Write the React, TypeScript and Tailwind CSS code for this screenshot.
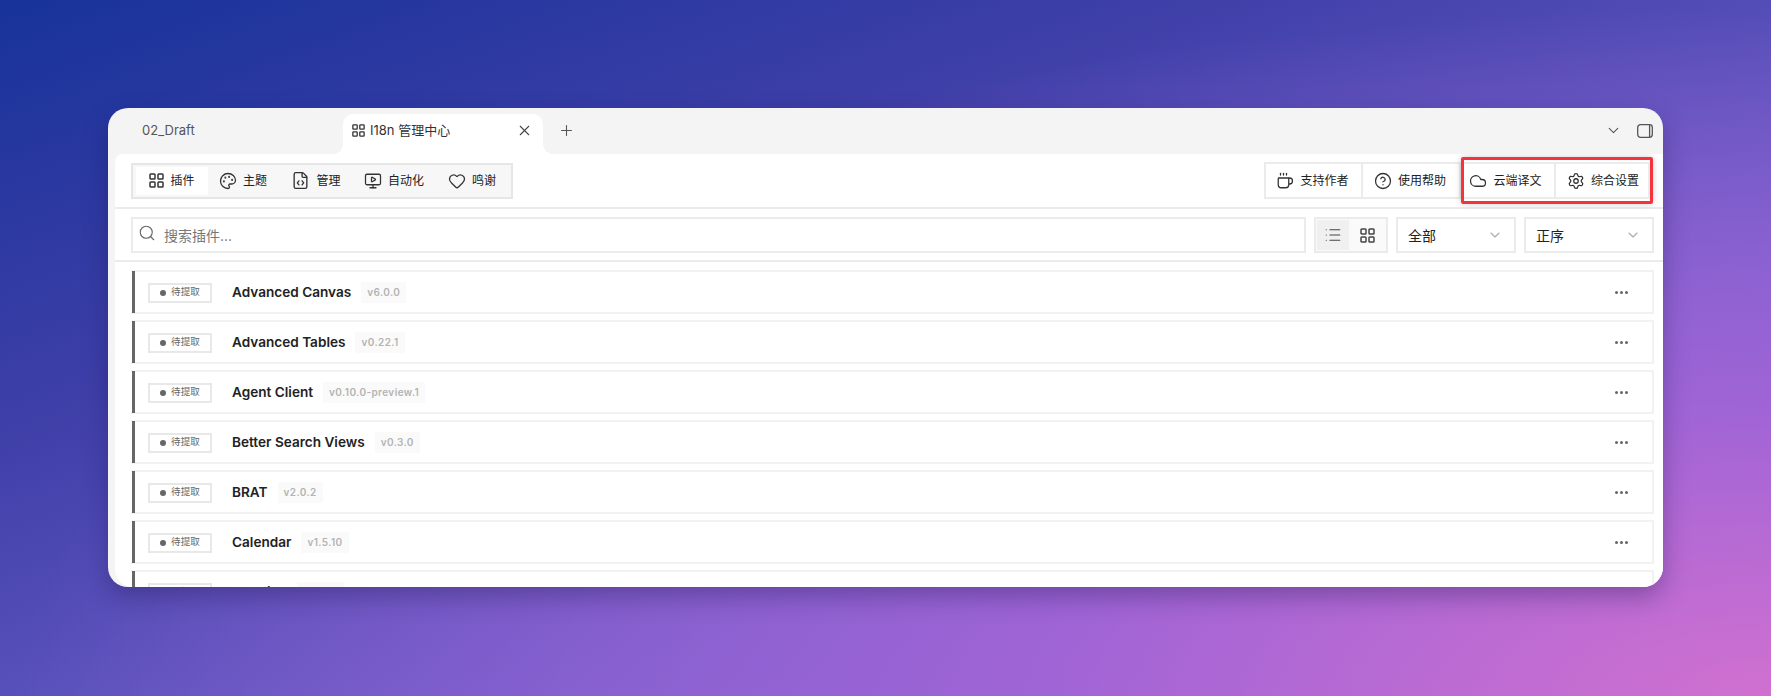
import React from 'react';
import {
  ChevronDown,
  Cloud,
  CircleHelp,
  Coffee,
  FileCode,
  Heart,
  List,
  MonitorPlay,
  Palette,
  Plus,
  Search,
  Settings,
  X,
} from 'lucide-react';

type IconProps = { className?: string; strokeWidth?: number };

// lucide's layout-grid is too round for this one
function GridIcon({ className }: IconProps) {
  return (
    <svg viewBox="0 0 15 15" fill="none" stroke="currentColor" strokeWidth="1.5" className={className}>
      <rect x="1" y="1" width="5" height="5" rx="0.8" />
      <rect x="9" y="1" width="5" height="5" rx="0.8" />
      <rect x="1" y="9" width="5" height="5" rx="0.8" />
      <rect x="9" y="9" width="5" height="5" rx="0.8" />
    </svg>
  );
}

const tabs = [
  { label: '插件', icon: GridIcon, active: true, width: 'w-[72px]', size: 'w-[15px] h-[15px]' },
  { label: '主题', icon: Palette, width: 'w-[72px] pr-[2px]', size: 'w-[18px] h-[18px]' },
  { label: '管理', icon: FileCode, width: 'w-[72px]', size: 'w-[19px] h-[19px]' },
  { label: '自动化', icon: MonitorPlay, width: 'w-[84px]', size: 'w-[18px] h-[18px]' },
  { label: '鸣谢', icon: Heart, width: 'w-[72px]', size: 'w-[18px] h-[18px]' },
];

const plugins = [
  { name: 'Advanced Canvas', version: 'v6.0.0' },
  { name: 'Advanced Tables', version: 'v0.22.1' },
  { name: 'Agent Client', version: 'v0.10.0-preview.1' },
  { name: 'Better Search Views', version: 'v0.3.0' },
  { name: 'BRAT', version: 'v2.0.2' },
  { name: 'Calendar', version: 'v1.5.10' },
  { name: 'Cardlink', version: 'v1.12.3' },
];

function ToolButton({ icon: Icon, label, width }: { icon: typeof Cloud; label: string; width: string }) {
  return (
    <div className={`flex items-center justify-center gap-[6px] text-[12px] text-[#222] border-r-2 border-[#ebebeb] last:border-r-0 ${width}`}>
      <Icon className="w-[18px] h-[18px] text-[#333]" strokeWidth={1.7} />
      <span>{label}</span>
    </div>
  );
}

function Select({ label, width }: { label: string; width: string }) {
  return (
    <div className={`h-9 flex items-center justify-between pl-[10px] pr-[11px] border-2 border-[#ebebeb] text-[14px] text-[#222] ${width}`}>
      <span>{label}</span>
      <ChevronDown className="w-4 h-4 text-[#aaa]" strokeWidth={1.6} />
    </div>
  );
}

function PluginRow({ name, version }: { name: string; version: string }) {
  return (
    <div className="h-[44px] shrink-0 flex items-center border-2 border-[#f2f2f2] border-l-0 relative pt-[1px] pl-[17px] pr-[24px]">
      <div className="absolute left-[1px] -top-[1px] -bottom-[1px] w-[3px] bg-[#666]" />
      <div className="w-[64px] h-[20px] flex items-center justify-center gap-[5px] border-2 border-[#e8e8e8] text-[9.6px] text-[#666]">
        <span className="w-[6px] h-[6px] rounded-full bg-[#666]" />
        <span>待提取</span>
      </div>
      <span className="ml-5 text-[13.6px] font-semibold text-[#222]">{name}</span>
      <span className="ml-[10px] px-[6px] py-[3px] bg-[#fafafa] text-[10px] font-semibold text-[#b3b3b3] tracking-[0.4px]">{version}</span>
      <svg viewBox="0 0 13 3" className="ml-auto w-[13px] h-[3px] text-[#666]" fill="currentColor">
        <circle cx="1.5" cy="1.5" r="1.5" />
        <circle cx="6.5" cy="1.5" r="1.5" />
        <circle cx="11.5" cy="1.5" r="1.5" />
      </svg>
    </div>
  );
}

export default function App() {
  return (
    <div className="w-[1771px] h-[696px] overflow-hidden pt-[108px] pl-[108px] bg-[radial-gradient(ellipse_at_100%_100%,#d070d0_0%,rgba(165,100,215,0.85)_30%,rgba(100,90,200,0)_70%),linear-gradient(160deg,#17339a_0%,#3f3fa8_32%,#6c5ec9_68%,#9069d8_100%)] font-['Inter','Noto_Sans_CJK_SC',sans-serif]">
      <div className="w-[1555px] h-[479px] rounded-[20px] overflow-hidden bg-[#f4f4f4] flex flex-col shadow-[0_10px_24px_rgba(30,20,80,0.35)]">
        {/* title bar */}
        <div className="h-[46px] shrink-0 flex items-end pl-[34px] pr-[10px]">
          <div className="h-[40px] w-[201px] flex items-center pb-[7px] text-[13px] text-[#555]">02_Draft</div>
          <div className="h-[40px] w-[200px] bg-white rounded-t-[10px] flex items-center pb-[7px] pl-[9px] pr-[10px] text-[13px] text-[#333] relative">
            <GridIcon className="w-[13px] h-[13px] mr-[5px]" />
            <span>I18n 管理中心</span>
            <X className="ml-auto w-[17px] h-[17px] text-[#444]" strokeWidth={1.5} />
            {/* flared bottom corners of the active tab */}
            <div className="absolute -left-[10px] bottom-0 w-[10px] h-[10px] bg-[radial-gradient(circle_at_0_0,#f4f4f4_10px,#ffffff_10px)]" />
            <div className="absolute -right-[10px] bottom-0 w-[10px] h-[10px] bg-[radial-gradient(circle_at_100%_0,#f4f4f4_10px,#ffffff_10px)]" />
          </div>
          <div className="h-[40px] flex items-center pb-[7px] ml-[15px]">
            <Plus className="w-[17px] h-[17px] text-[#555]" strokeWidth={1.5} />
          </div>
          <div className="h-[40px] ml-auto flex items-center pb-[7px] gap-[15px]">
            <ChevronDown className="w-[17px] h-[17px] text-[#555]" strokeWidth={1.6} />
            <svg viewBox="0 0 16 14" fill="none" stroke="#555" strokeWidth="1.3" className="w-4 h-[14px]">
              <rect x="0.7" y="0.7" width="14.6" height="12.6" rx="2.8" />
              <path d="M12.6 1v12" />
            </svg>
          </div>
        </div>

        {/* content */}
        <div className="flex-1 min-h-0 ml-[7px] bg-white rounded-tl-[8px] rounded-bl-[18px] overflow-hidden flex flex-col">
          <div className="h-[55px] shrink-0 flex items-center justify-between pl-4 pr-[11px] border-b-2 border-[#ebebeb]">
            <div className="h-9 w-[382px] flex items-center px-[3px] bg-[#f7f7f7] border-2 border-[#e6e6e6]">
              {tabs.map(({ label, icon: Icon, active, width, size }) => (
                <div key={label} className={`h-7 flex items-center justify-center gap-[6px] text-[12px] text-[#222] ${width} ${active ? 'bg-white' : ''}`}>
                  <Icon className={`${size} text-[#333]`} strokeWidth={1.7} />
                  <span>{label}</span>
                </div>
              ))}
            </div>
            <div className="flex items-center h-[37px]">
              <div className="h-full flex border-2 border-r-0 border-[#ebebeb]">
                <ToolButton icon={Coffee} label="支持作者" width="w-[97px] pr-[2px]" />
                <ToolButton icon={CircleHelp} label="使用帮助" width="w-[96px] pr-[2px]" />
              </div>
              <div className="relative h-full flex border-y-2 border-r-2 border-l-2 border-[#ebebeb]">
                <ToolButton icon={Cloud} label="云端译文" width="w-[95px] pr-[4px]" />
                <ToolButton icon={Settings} label="综合设置" width="w-[94px] pl-[2px]" />
                <div className="absolute left-0 -right-[3px] -top-[7px] -bottom-[7px] border-[3px] border-[#f5333f] rounded-[2px] shadow-[0_0_6px_rgba(0,0,0,0.2)]" />
              </div>
            </div>
          </div>

          <div className="h-[53px] shrink-0 flex items-start pt-2 gap-2 pl-4 pr-[9px] border-b-2 border-[#ebebeb]">
            <div className="flex-1 h-9 flex items-center gap-[8px] pl-[5px] border-2 border-[#ebebeb] text-[14px] text-[#777]">
              <Search className="w-[18px] h-[18px] text-[#666] -translate-y-[2px]" strokeWidth={1.5} />
              <span>搜索插件...</span>
            </div>
            <div className="h-9 w-[74px] flex items-center p-[1px] bg-[#fafafa] border-2 border-[#ebebeb]">
              <div className="w-[32px] h-[30px] flex items-center justify-center bg-[#f0f0f0]">
                <List className="w-[18px] h-[18px] text-[#444]" strokeWidth={1.6} />
              </div>
              <div className="w-[36px] h-[30px] flex items-center justify-center">
                <GridIcon className="w-[15px] h-[15px] text-[#444]" />
              </div>
            </div>
            <Select label="全部" width="w-[120px]" />
            <Select label="正序" width="w-[130px]" />
          </div>

          <div className="flex flex-col gap-[6px] pt-[8px] pl-4 pr-[9px]">
            {plugins.map((p) => (
              <PluginRow key={p.name} name={p.name} version={p.version} />
            ))}
          </div>
        </div>
      </div>
    </div>
  );
}
